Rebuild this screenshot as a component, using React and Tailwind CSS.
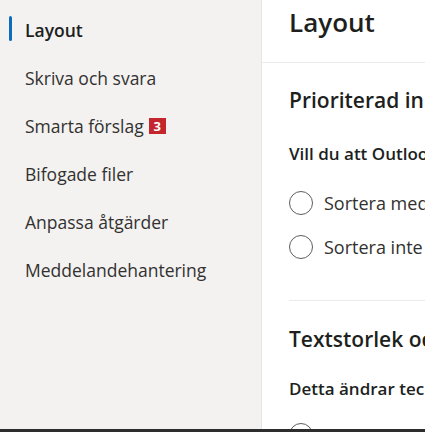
const navItems = [
  { label: "Layout", active: true },
  { label: "Skriva och svara" },
  { label: "Smarta förslag", badge: "3" },
  { label: "Bifogade filer" },
  { label: "Anpassa åtgärder" },
  { label: "Meddelandehantering" },
];

const Radio = ({ label }) => (
  <div className="flex h-[44px] items-center gap-[11px] whitespace-nowrap">
    <span className="h-[24px] w-[24px] shrink-0 rounded-full border-[1.5px] border-[#605e5c]" />
    <span className="text-[18px] text-[#323130]">{label}</span>
  </div>
);

export default function App() {
  return (
    <div
      className="flex h-[432px] w-[425px] flex-col overflow-hidden bg-white"
      style={{ fontFamily: '"Open Sans", "Noto Sans", sans-serif' }}
    >
      <div className="flex h-[429px] overflow-hidden">
        {/* sidebar */}
        <nav className="w-[262px] shrink-0 border-r border-[#e8e6e4] bg-[#f3f2f1] pt-[6px]">
          {navItems.map((item) => (
            <div key={item.label} className="relative flex h-[48px] items-center pl-[25px]">
              {item.active && (
                <span className="absolute left-[9px] top-[10px] h-[25px] w-[3px] rounded-full bg-[#0f6cbd]" />
              )}
              <span
                className={
                  item.active
                    ? "text-[17.5px] font-semibold text-[#201f1e]"
                    : "text-[17.5px] text-[#323130]"
                }
              >
                {item.label}
              </span>
              {item.badge && (
                <span className="ml-[5px] flex h-[16px] w-[17px] items-center justify-center bg-[#c4262e] text-[13px] font-bold leading-none text-white">
                  {item.badge}
                </span>
              )}
            </div>
          ))}
        </nav>

        {/* content */}
        <main className="min-w-0 flex-1 overflow-hidden">
          <div className="h-[63px] border-b border-[#edebe9] pl-[27px] pt-[3px]">
            <h1 className="whitespace-nowrap text-[26px] font-semibold leading-[38px] text-[#201f1e]">Layout</h1>
          </div>
          <div className="pl-[27px]">
            <h2 className="mt-[22px] whitespace-nowrap text-[21px] font-semibold leading-[30px] text-[#201f1e]">
              Prioriterad inkorg
            </h2>
            <p className="mt-[28px] whitespace-nowrap text-[17px] font-semibold leading-[22px] text-[#201f1e]">
              Vill du att Outlook ska sortera din e-post så att du kan fokusera på det som är viktigast?
            </p>
            <div className="mt-[16px]">
              <Radio label="Sortera meddelanden till Prioriterat och Övrigt" />
              <Radio label="Sortera inte mina meddelanden" />
            </div>
            <div className="mt-[31px] border-t border-[#edebe9]" />
            <h2 className="mt-[23px] whitespace-nowrap text-[21px] font-semibold leading-[30px] text-[#201f1e]">
              Textstorlek och avstånd
            </h2>
            <p className="mt-[24px] whitespace-nowrap text-[17px] font-semibold leading-[22px] text-[#201f1e]">
              Detta ändrar teckenstorleken och avståndet i Outlook.
            </p>
            <div className="mt-[23px] flex items-center gap-[11px]">
              <span className="h-[24px] w-[24px] shrink-0 rounded-full border-[1.5px] border-[#605e5c]" />
            </div>
          </div>
        </main>
      </div>
      <div className="h-[3px] shrink-0 bg-[#2d2d2d]" />
    </div>
  );
}
